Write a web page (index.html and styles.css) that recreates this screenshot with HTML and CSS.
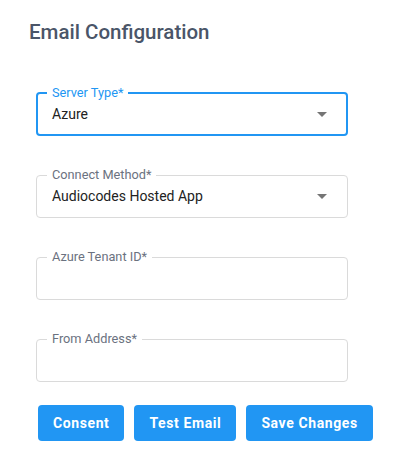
FILE: index.html
```html
<!DOCTYPE html>
<html>
<head>
<meta charset="utf-8">
<link rel="stylesheet" href="styles.css">
</head>
<body>
<div class="page">
  <h1 class="title">Email Configuration</h1>
  <div class="form">
    <fieldset class="field focused">
      <legend class="label">Server Type*</legend>
      <div class="row">
        <span class="value">Azure</span>
        <svg class="caret" viewBox="0 0 24 24" width="24" height="24"><path d="M7 10l5 5 5-5z"/></svg>
      </div>
    </fieldset>
    <fieldset class="field">
      <legend class="label">Connect Method*</legend>
      <div class="row">
        <span class="value">Audiocodes Hosted App</span>
        <svg class="caret" viewBox="0 0 24 24" width="24" height="24"><path d="M7 10l5 5 5-5z"/></svg>
      </div>
    </fieldset>
    <fieldset class="field">
      <legend class="label">Azure Tenant ID*</legend>
      <div class="row"></div>
    </fieldset>
    <fieldset class="field">
      <legend class="label">From Address*</legend>
      <div class="row"></div>
    </fieldset>
  </div>
  <div class="actions">
    <button class="btn">Consent</button>
    <button class="btn">Test Email</button>
    <button class="btn">Save Changes</button>
  </div>
</div>
</body>
</html>
```
FILE: styles.css
```css
html, body {
  margin: 0;
  padding: 0;
  background: #ffffff;
  font-family: Roboto, "Liberation Sans", sans-serif;
}
.page {
  padding: 20px 0 0 29px;
}
.title {
  margin: 0;
  font-size: 20.5px;
  line-height: 24px;
  font-weight: 500;
  color: #4a5568;
}
.form {
  margin-top: 43px;
  margin-left: 7px;
  width: 312px;
  display: flex;
  flex-direction: column;
  gap: 33px;
}
.field {
  margin: 0;
  min-width: 0;
  padding: 0 13px 6px 15px;
  border: 1px solid #dadada;
  border-radius: 4px;
}
.field.focused {
  border: 2px solid #2196f3;
  padding: 0 12px 5px 14px;
}
.label {
  padding: 0 5px;
  margin-left: -5px;
  font-size: 12.75px;
  line-height: 12px;
  color: #6b7280;
}
.focused .label {
  color: #2196f3;
}
.row {
  height: 30px;
  display: flex;
  align-items: center;
  justify-content: space-between;
}
.value {
  font-size: 14px;
  color: #222222;
}
.caret {
  fill: #757575;
  flex: none;
}
.actions {
  margin-top: 23px;
  margin-left: 9px;
  display: flex;
  gap: 10px;
}
.btn {
  height: 36px;
  padding: 0 15px;
  border: none;
  border-radius: 4px;
  background: #2196f3;
  color: #ffffff;
  font-family: Roboto, "Liberation Sans", sans-serif;
  font-size: 14px;
  font-weight: 700;
  letter-spacing: 0.6px;
}
```
